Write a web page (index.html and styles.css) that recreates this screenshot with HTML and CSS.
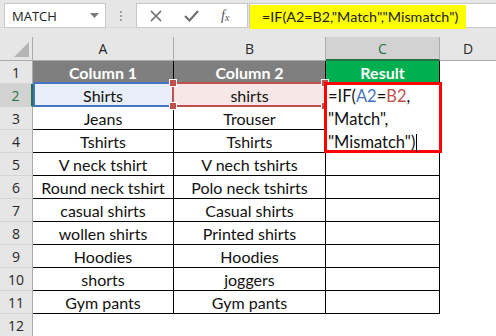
FILE: index.html
```html
<!DOCTYPE html>
<html lang="en">
<head>
  <meta charset="UTF-8">
  <title>MATCH</title>
  <link rel="stylesheet" href="styles.css">
</head>
<body>
  <!-- Formula bar -->
  <div class="formula-bar">
    <div class="name-box">
      <span>MATCH</span>
      <svg class="caret" width="9" height="5" viewBox="0 0 9 5"><path d="M0 0h9L4.5 5z" fill="#7b7b7b"/></svg>
    </div>
    <div class="grip"><i></i><i></i><i></i></div>
    <div class="fx-box">
      <svg width="12" height="12" viewBox="0 0 12 12"><path d="M1 1l10 10M11 1L1 11" stroke="#6a6a6a" stroke-width="1.6"/></svg>
      <svg width="15" height="12" viewBox="0 0 15 12"><path d="M1 6l4.5 4.5L14 1" stroke="#6a6a6a" stroke-width="2" fill="none"/></svg>
      <span class="fx">f<sub>x</sub></span>
    </div>
    <div class="formula-input">
      <span class="highlight">=IF(A2=B2,"Match","Mismatch")</span>
    </div>
  </div>
  <div class="spacer"></div>

  <!-- Sheet -->
  <div class="sheet">
    <div class="corner"><span class="tri"></span></div>
    <div class="col-head">A</div>
    <div class="col-head">B</div>
    <div class="col-head active">C</div>
    <div class="col-head last">D</div>

    <div class="row-head">1</div>
    <div class="cell title">Column 1</div>
    <div class="cell title">Column 2</div>
    <div class="cell title green">Result</div>
    <div class="blank"></div>

    <div class="row-head active">2</div>
    <div class="cell ref-blue">Shirts</div>
    <div class="cell ref-red">shirts
      <span class="handle tl"></span><span class="handle bl"></span>
      <span class="handle tr"></span><span class="handle br"></span>
    </div>
    <div class="cell editing">
      <div class="edit-box">
        <div>=IF(<span class="blue">A2</span>=<span class="red">B2</span>,</div>
        <div>"Match",</div>
        <div>"Mismatch")<span class="cursor"></span></div>
      </div>
    </div>
    <div class="blank"></div>

    <div class="row-head">3</div>
    <div class="cell">Jeans</div>
    <div class="cell">Trouser</div>
    <div class="cell"></div>
    <div class="blank"></div>

    <div class="row-head">4</div>
    <div class="cell">Tshirts</div>
    <div class="cell">Tshirts</div>
    <div class="cell"></div>
    <div class="blank"></div>

    <div class="row-head">5</div>
    <div class="cell">V neck tshirt</div>
    <div class="cell">V nech tshirts</div>
    <div class="cell"></div>
    <div class="blank"></div>

    <div class="row-head">6</div>
    <div class="cell">Round neck tshirt</div>
    <div class="cell">Polo neck tshirts</div>
    <div class="cell"></div>
    <div class="blank"></div>

    <div class="row-head">7</div>
    <div class="cell">casual shirts</div>
    <div class="cell">Casual shirts</div>
    <div class="cell"></div>
    <div class="blank"></div>

    <div class="row-head">8</div>
    <div class="cell">wollen shirts</div>
    <div class="cell">Printed shirts</div>
    <div class="cell"></div>
    <div class="blank"></div>

    <div class="row-head">9</div>
    <div class="cell">Hoodies</div>
    <div class="cell">Hoodies</div>
    <div class="cell"></div>
    <div class="blank"></div>

    <div class="row-head">10</div>
    <div class="cell">shorts</div>
    <div class="cell">joggers</div>
    <div class="cell"></div>
    <div class="blank"></div>

    <div class="row-head">11</div>
    <div class="cell">Gym pants</div>
    <div class="cell">Gym pants</div>
    <div class="cell"></div>
    <div class="blank"></div>

    <div class="row-head">12</div>
    <div class="blank"></div>
    <div class="blank"></div>
    <div class="blank"></div>
    <div class="blank"></div>
  </div>
</body>
</html>
```

FILE: styles.css
```css
/* General */
body {
  margin: 0;
  background: #e6e6e6;
  font-family: 'Lato', 'Liberation Sans', sans-serif;
  color: #111;
  overflow: hidden;
}

/* Formula bar */
.formula-bar {
  display: flex;
  align-items: flex-start;
  height: 28px;
  padding-top: 3px;
  box-sizing: border-box;
  border-bottom: 1px solid #d8d8d8;
}

.name-box {
  margin-left: 4px;
  width: 102px;
  height: 25px;
  box-sizing: border-box;
  background: #fff;
  border: 1px solid #c8c8c8;
  display: flex;
  align-items: center;
  justify-content: space-between;
  padding: 0 6px 0 7px;
  font-family: 'Open Sans', sans-serif;
  font-size: 13px;
  color: #222;
}

.grip {
  width: 30px;
  height: 25px;
  display: flex;
  flex-direction: column;
  align-items: center;
  justify-content: center;
  gap: 2px;
}

.grip i {
  width: 2px;
  height: 2px;
  background: #a4a4a4;
}

.fx-box {
  width: 112px;
  height: 25px;
  box-sizing: border-box;
  background: #fff;
  border: 1px solid #c8c8c8;
  display: flex;
  align-items: center;
  padding-left: 13px;
  gap: 22px;
}

.fx {
  font-family: 'Liberation Serif', serif;
  font-style: italic;
  font-size: 14px;
  color: #555;
}

.fx sub {
  font-size: 10px;
  vertical-align: -1px;
}

.formula-input {
  flex: 1;
  height: 25px;
  margin-left: 1px;
  box-sizing: border-box;
  background: #fff;
  border: 1px solid #c8c8c8;
  border-right: none;
}

.highlight {
  display: inline-block;
  margin-top: 1px;
  width: 216px;
  height: 24px;
  box-sizing: border-box;
  padding-left: 12px;
  background: #ffff00;
  font-size: 14.3px;
  line-height: 24px;
  color: #222;
}

.spacer {
  height: 9px;
}

/* Sheet */
.sheet {
  display: grid;
  grid-template-columns: 33px 141px 152px 114px 1fr;
  grid-template-rows: 24px;
  grid-auto-rows: 23px;
  background: #fff;
}

.corner,
.col-head {
  background: #e6e6e6;
  border-right: 1px solid #ababab;
  border-bottom: 1px solid #ababab;
  box-sizing: border-box;
  position: relative;
}

.corner .tri {
  position: absolute;
  right: 3px;
  bottom: 3px;
  width: 0;
  height: 0;
  border-left: 15px solid transparent;
  border-bottom: 15px solid #b5b5b5;
}

.col-head {
  display: flex;
  align-items: center;
  justify-content: center;
  font-family: 'Open Sans', sans-serif;
  font-size: 14px;
  color: #262626;
}

.col-head.active {
  background: #d2d2d2;
  color: #217346;
  border-bottom: 2px solid #217346;
}

.col-head.last {
  border-right: none;
}

.row-head {
  background: #e6e6e6;
  border-right: 1px solid #ababab;
  border-bottom: 1px solid #d4d4d4;
  box-sizing: border-box;
  display: flex;
  align-items: center;
  justify-content: center;
  font-family: 'Open Sans', sans-serif;
  font-size: 14px;
  color: #262626;
}

.row-head.active {
  background: #d2d2d2;
  color: #217346;
  border-right: 2px solid #217346;
}

.cell {
  border-right: 1px solid #000;
  border-bottom: 1px solid #000;
  box-sizing: border-box;
  display: flex;
  align-items: center;
  justify-content: center;
  font-size: 16px;
  white-space: nowrap;
  position: relative;
}

.blank {
  background: #fff;
}

.title {
  background: #7f7f7f;
  color: #fff;
  font-weight: bold;
}

.title.green {
  background: #00b050;
}

/* Reference highlights */
.ref-blue {
  background: #e8eef8;
}

.ref-blue::after {
  content: '';
  position: absolute;
  top: -2px;
  bottom: -1px;
  left: 0;
  right: 0;
  border: 2px solid #4472c4;
  border-right: none;
}

.ref-red {
  background: #f8e7e7;
}

.ref-red::after {
  content: '';
  position: absolute;
  top: -2px;
  bottom: -1px;
  left: -2px;
  right: -1px;
  border: 2px solid #c0504d;
}

.handle {
  position: absolute;
  width: 6px;
  height: 6px;
  background: #c0504d;
  border: 1px solid #fff;
  z-index: 2;
}

.handle.tl { left: -5px; top: -5px; }
.handle.bl { left: -5px; bottom: -4px; }
.handle.tr { right: -4px; top: -5px; }
.handle.br { right: -4px; bottom: -4px; }

/* Cell being edited */
.editing {
  z-index: 3;
}

.edit-box {
  position: absolute;
  left: -2px;
  top: -2px;
  width: 118px;
  height: 71px;
  box-sizing: border-box;
  border: 3px solid #ff0000;
  background: #fff;
  padding-left: 1px;
  font-size: 16.5px;
  line-height: 23px;
  color: #111;
}

.edit-box .blue { color: #4472c4; }
.edit-box .red { color: #c0504d; }

.cursor {
  display: inline-block;
  width: 1px;
  height: 18px;
  background: #000;
  vertical-align: -4px;
  margin-left: 1px;
}
```
